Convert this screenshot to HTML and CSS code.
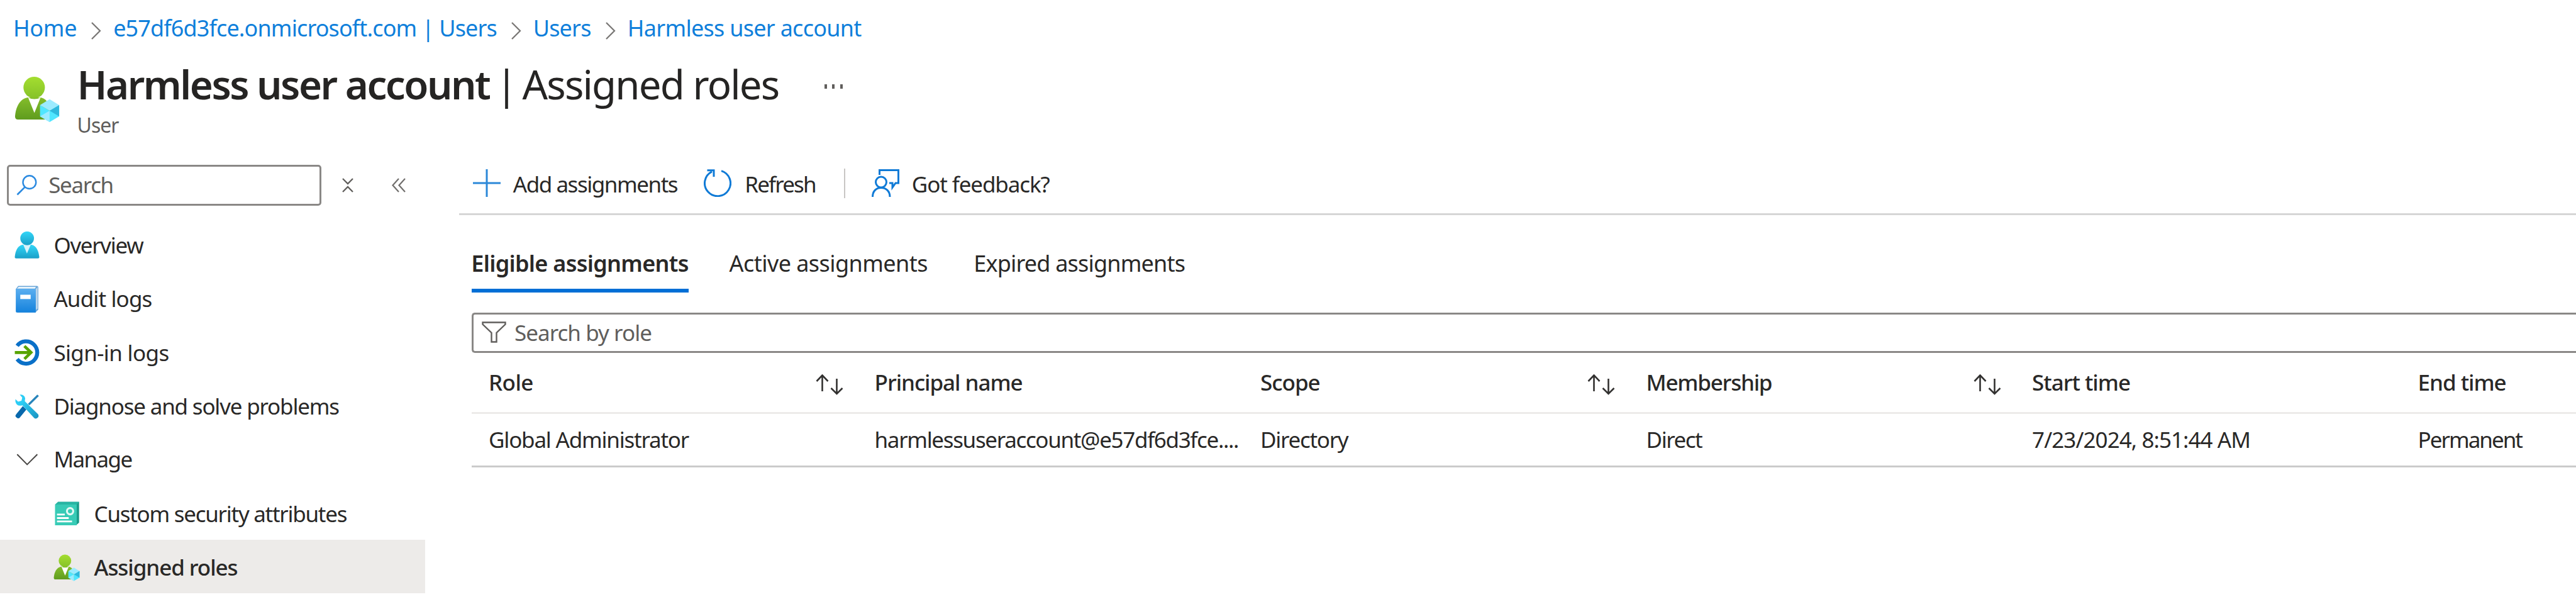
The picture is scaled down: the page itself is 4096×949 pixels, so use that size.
FILE: index.html
```html
<!DOCTYPE html>
<html lang="en">
<head>
<meta charset="utf-8">
<title>Harmless user account | Assigned roles</title>
<link rel="stylesheet" href="styles.css">
</head>
<body>
<svg class="defs" aria-hidden="true">
  <defs>
    <linearGradient id="green-head" x1="0" y1="0" x2="0" y2="1"><stop offset="0" stop-color="#a4de30"/><stop offset="1" stop-color="#86c229"/></linearGradient>
    <linearGradient id="green-body" x1="0" y1="0" x2="0" y2="1"><stop offset="0" stop-color="#84bd2b"/><stop offset="1" stop-color="#5f9c1e"/></linearGradient>
    <linearGradient id="cyan" x1="0" y1="0" x2="0" y2="1"><stop offset="0" stop-color="#33d6f8"/><stop offset="1" stop-color="#1aa0c8"/></linearGradient>
    <linearGradient id="book" x1="0" y1="0" x2="0" y2="1"><stop offset="0" stop-color="#5aaef0"/><stop offset="1" stop-color="#1482dc"/></linearGradient>
    <linearGradient id="wrench" x1="0" y1="0" x2="1" y2="1"><stop offset="0.3" stop-color="#2ccdf5"/><stop offset="1" stop-color="#1a93c0"/></linearGradient>
    <symbol id="user-role" viewBox="74 30 232 238">
      <path d="M92 252Q77 252 77 236C80 190 100 146 142 139H208C238 145 260 170 262 252Z" fill="url(#green-body)"/>
      <path d="M144 139L176 218L208 139Q176 156 144 139Z" fill="#fff"/>
      <circle cx="175" cy="88" r="55" fill="url(#green-head)"/>
      <path d="M205 178L254 207V265L205 236Z" fill="#50e6ff"/>
      <path d="M303 178L254 207V265L303 236Z" fill="#50e6ff"/>
      <path d="M205 178L254 148L303 178L254 207Z" fill="#9cebff"/>
      <path d="M303 178L254 207L303 236Z" fill="#2fb9dd"/>
      <path d="M205 236L254 207V265Z" fill="#9cebff"/>
    </symbol>
    <symbol id="sort" viewBox="0 0 44 33">
      <path d="M10.500 27V1.500M1.500 11L10.500 1.500L19.500 11M33.500 7V31M24.500 22L33.500 31L42.500 22" fill="none" stroke="#323130" stroke-width="2.600"/>
    </symbol>
    <symbol id="crumb-sep" viewBox="0 0 17 28">
      <path d="M2 1L15 14L2 27" fill="none" stroke="#7a7876" stroke-width="2.300"/>
    </symbol>
  </defs>
</svg>

<nav class="breadcrumb">
  <a class="crumb-home">Home</a>
  <svg class="sep"><use href="#crumb-sep"/></svg>
  <a class="crumb-tenant">e57df6d3fce.onmicrosoft.com | Users</a>
  <svg class="sep"><use href="#crumb-sep"/></svg>
  <a class="crumb-users">Users</a>
  <svg class="sep"><use href="#crumb-sep"/></svg>
  <a class="crumb-account">Harmless user account</a>
</nav>

<header class="header">
  <svg class="header-icon"><use href="#user-role"/></svg>
  <div>
    <div class="title">
      <h1 class="title-name">Harmless user account</h1>
      <span>|</span>
      <span class="title-page">Assigned roles</span>
      <svg class="dots" viewBox="0 0 29 7"><path d="M0 0h4v7h-4zM12 0h4v7h-4zM25 0h4v7h-4z" fill="#605e5c"/></svg>
    </div>
    <div class="subtitle">User</div>
  </div>
</header>

<div class="content">
  <aside class="sidebar">
    <div class="side-tools">
      <div class="side-search">
        <svg class="magnifier" viewBox="0 0 34 34"><circle cx="21.500" cy="12" r="10.700" fill="none" stroke="#2b8ae0" stroke-width="2.500"/><path d="M14 20L1.500 32.500" stroke="#2b8ae0" stroke-width="2.800"/></svg>
        <span class="search-label">Search</span>
      </div>
      <svg class="collapse" viewBox="0 0 18 23"><path d="M1 1L9 9L17 1M1 22L9 14L17 22" fill="none" stroke="#605e5c" stroke-width="2.300"/></svg>
      <svg class="chevrons" viewBox="0 0 22 23"><path d="M11 1L1.500 11.500L11 22M21 1L11.500 11.500L21 22" fill="none" stroke="#706e6c" stroke-width="2.200"/></svg>
    </div>
    <div class="nav">
      <div class="nav-item">
        <svg class="nav-icon" viewBox="40 48 135 137">
          <path d="M52 185Q44 185 45 177C48 145 60 119 85 115H130C154 119 167 145 170 177Q171 185 163 185Z" fill="url(#cyan)"/>
          <path d="M88 114L107 160L127 114Z" fill="#d9f3fb"/>
          <circle cx="108" cy="82" r="35" fill="url(#cyan)"/>
        </svg>
        <span class="t-overview">Overview</span>
      </div>
      <div class="nav-item">
        <svg class="nav-icon" viewBox="40 323 135 137">
          <path d="M50 340L62 324H158Q165 324 165 332V445L150 460H58Z" fill="#6aa6d8"/>
          <path d="M56 338L65 329H153L148 338Z" fill="#eaf5fd"/>
          <path d="M152 340L162 330V440L152 447Z" fill="#bcd5ea"/>
          <path d="M50 339H152V460H57Q50 460 50 453Z" fill="url(#book)"/>
          <path d="M73 369H126V391H73Z" fill="#fff"/>
        </svg>
        <span class="t-audit">Audit logs</span>
      </div>
      <div class="nav-item">
        <svg class="nav-icon" viewBox="40 600 135 137">
          <path d="M57 634A57 57 0 1 1 57 702" fill="none" stroke="#0a70c8" stroke-width="20"/>
          <path d="M45 668H126M94 635L128 668L94 701" fill="none" stroke="#57a300" stroke-width="15"/>
        </svg>
        <span class="t-signin">Sign-in logs</span>
      </div>
      <div class="nav-item">
        <svg class="nav-icon" viewBox="40 36 135 137">
          <path d="M160 43L168 50L120 97L112 90Z" fill="#2784ba"/>
          <path d="M86 101L104 119L70 161Q63 168 54 160L50 156Q46 150 52 143Z" fill="#0868ac"/>
          <path d="M70 43Q94 42 98 62L96 76L164 143Q170 153 162 161Q153 169 144 162L84 97Q54 106 48 78V66L62 79L79 74L83 58Z" fill="url(#wrench)"/>
        </svg>
        <span class="t-diagnose">Diagnose and solve problems</span>
      </div>
      <div class="nav-item manage">
        <svg class="nav-icon" viewBox="40 305 135 137"><path d="M57 347L108 399L160 347" fill="none" stroke="#484644" stroke-width="6.500"/></svg>
        <span class="t-manage">Manage</span>
      </div>
      <div class="nav-item sub">
        <svg class="nav-icon" viewBox="245 586 135 137">
          <path d="M268 594H376V700L360 714H268Z" fill="#1c9c8a"/>
          <path d="M253 608L268 594H376L364 608Z" fill="#28b5a3"/>
          <path d="M253 608H364V714H253Z" fill="#38cbb6"/>
          <circle cx="330" cy="642" r="16" fill="none" stroke="#e6faf6" stroke-width="10"/>
          <path d="M263 659H303M263 677H323M263 694H340" stroke="#fff" stroke-width="9"/>
        </svg>
        <span class="t-custom">Custom security attributes</span>
      </div>
      <div class="nav-item sub selected">
        <svg class="nav-icon"><use href="#user-role"/></svg>
        <span class="t-assigned">Assigned roles</span>
      </div>
    </div>
  </aside>

  <main class="main">
    <div class="toolbar">
      <svg class="tool-icon" viewBox="0 0 44 44"><path d="M22 0V44M0 22H44" stroke="#2b88d8" stroke-width="3"/></svg>
      <span class="t-add">Add assignments</span>
      <svg class="tool-icon" viewBox="0 0 44 44"><path d="M28 2.600A20.500 20.500 0 1 1 13 3.800M5.500 1.800H16V12" fill="none" stroke="#0f7ad6" stroke-width="3"/></svg>
      <span class="t-refresh">Refresh</span>
      <span class="divider"></span>
      <svg class="tool-icon" viewBox="0 0 44 44"><path d="M12.500 9V1.500H42.500V22H38L33 29V22H28M1.500 44C1.500 35 7 29.500 15 29.500S29 35 29 44" fill="none" stroke="#0f7ad6" stroke-width="3"/><circle cx="15" cy="20.500" r="8.500" fill="none" stroke="#0f7ad6" stroke-width="3"/></svg>
      <span class="t-feedback">Got feedback?</span>
    </div>
    <div class="panel">
      <div class="tabs">
        <div class="tab active">Eligible assignments</div>
        <div class="tab t-active">Active assignments</div>
        <div class="tab t-expired">Expired assignments</div>
      </div>
      <div class="role-search">
        <svg class="funnel" viewBox="0 0 39 34"><path d="M1.500 1.500H37.500V4.500L23.500 18V32.500H15.500V18L1.500 4.500Z" fill="none" stroke="#605e5c" stroke-width="2.400"/></svg>
        <span class="t-byrole">Search by role</span>
      </div>
      <div class="row head">
        <div class="cell"><span class="h-role">Role</span><svg class="sort"><use href="#sort"/></svg></div>
        <div class="cell"><span class="h-principal">Principal name</span></div>
        <div class="cell"><span class="h-scope">Scope</span><svg class="sort"><use href="#sort"/></svg></div>
        <div class="cell"><span class="h-member">Membership</span><svg class="sort"><use href="#sort"/></svg></div>
        <div class="cell"><span class="h-start">Start time</span></div>
        <div class="cell"><span class="h-end">End time</span></div>
      </div>
      <div class="row">
        <div class="cell"><span class="d-role">Global Administrator</span></div>
        <div class="cell"><span class="d-principal">harmlessuseraccount@e57df6d3fce....</span></div>
        <div class="cell"><span class="d-scope">Directory</span></div>
        <div class="cell"><span class="d-member">Direct</span></div>
        <div class="cell"><span class="d-start">7/23/2024, 8:51:44 AM</span></div>
        <div class="cell"><span class="d-end">Permanent</span></div>
      </div>
    </div>
  </main>
</div>
</body>
</html>
```
FILE: styles.css
```css
* { box-sizing: border-box; }
body {
  margin: 0;
  width: 4096px;
  height: 949px;
  overflow: hidden;
  background: #fff;
  color: #292827;
  font: 35px/48px "Noto Sans", "Open Sans", sans-serif;
  white-space: nowrap;
}
svg { display: block; flex: none; }
.defs { position: absolute; width: 0; height: 0; }

/* Breadcrumb */
.breadcrumb {
  display: grid;
  grid-template-columns: 123.2px 36px 631.6px 35.9px 114.5px 35.7px auto;
  align-items: center;
  height: 90px;
  padding-left: 21px;
  color: #0f7fdb;
  font-size: 36px;
}
.sep { width: 17px; height: 28px; margin-top: 7px; }
.crumb-home { letter-spacing: -0.31px; }
.crumb-tenant { letter-spacing: -0.88px; }
.crumb-users { letter-spacing: -0.81px; }
.crumb-account { letter-spacing: -0.72px; }

/* Title */
.header { display: grid; grid-template-columns: 99.500px auto; height: 129px; padding-left: 23px; }
.header-icon { width: 72px; height: 74px; margin-top: 31px; }
.title {
  display: grid;
  grid-template-columns: 665.500px 42.600px 480.900px auto;
  align-items: center;
  height: 88px;
  font-size: 63.500px;
  line-height: 88px;
  color: #252423;
}
.title-name { margin: 0; font-size: inherit; font-weight: 600; letter-spacing: -2.48px; }
.title-page { letter-spacing: -1.83px; }
.dots { width: 29px; height: 7px; margin-top: 6px; }
.subtitle { font-size: 32px; line-height: 42px; letter-spacing: -1px; color: #605e5c; }

.content { display: grid; grid-template-columns: 676px 1fr; column-gap: 53.600px; }

/* Sidebar */
.side-tools { display: flex; align-items: center; margin-top: 42.500px; height: 65px; padding-left: 11px; }
.side-search {
  display: flex;
  align-items: center;
  width: 499.500px;
  height: 65px;
  padding-left: 12.400px;
  border: 3px solid #8a8886;
  border-radius: 5px;
}
.magnifier { width: 33px; height: 33px; }
.search-label { margin-left: 17.800px; letter-spacing: -1.35px; color: #605e5c; }
.collapse { width: 18px; height: 23px; margin-left: 33.500px; }
.chevrons { width: 22px; height: 23px; margin-left: 60.500px; }
.nav { margin-top: 18.800px; }
.nav-item { display: flex; align-items: center; gap: 21.700px; height: 85.400px; padding: 4px 0 0 21.700px; }
.nav-item.manage { padding-top: 1px; }
.nav-item.sub { padding-left: 85.300px; gap: 22.300px; }
.selected { background: #edebe9; font-weight: 500; }
.nav-icon { width: 42px; height: 43px; }
.t-overview { letter-spacing: -1.33px; }
.t-audit { letter-spacing: -0.87px; }
.t-signin { letter-spacing: -0.65px; }
.t-diagnose { letter-spacing: -1.2px; }
.t-manage { letter-spacing: -1.6px; }
.t-custom { letter-spacing: -1.28px; }
.t-assigned { letter-spacing: -1.08px; }

/* Command bar */
.toolbar {
  display: grid;
  grid-template-columns: 64.200px 302.900px 65.600px 157.700px 44.400px 63.500px auto;
  align-items: center;
  margin-top: 24px;
  height: 99.400px;
  padding: 4px 0 0 22px;
  border-bottom: 3px solid #d6d6d6;
}
.tool-icon { width: 44px; height: 44px; margin-top: -4px; }
.divider { width: 2.500px; height: 47px; margin-top: -4px; background: #c8c6c4; }
.t-add { letter-spacing: -1.47px; }
.t-refresh { letter-spacing: -1.85px; }
.t-feedback { letter-spacing: -1.12px; }

/* Tabs */
.panel { padding-left: 20.700px; }
.tabs { display: grid; grid-template-columns: 345px 388.700px auto; padding-top: 46px; font-size: 36px; }
.tab { height: 77px; line-height: 61px; }
.tab.active { border-bottom: 6px solid #006fd6; font-weight: 600; letter-spacing: -0.7px; text-indent: -1px; }
.tab.t-active { margin-left: 64.300px; letter-spacing: -0.56px; }
.tab.t-expired { margin-left: 64.300px; letter-spacing: -0.81px; }

/* Role filter */
.role-search {
  display: flex;
  align-items: center;
  height: 64.200px;
  margin-top: 31.600px;
  padding-left: 12.800px;
  border: 3px solid #8a8886;
  border-right: 0;
  border-radius: 5px 0 0 5px;
}
.funnel { width: 39px; height: 34px; margin-bottom: 3px; }
.t-byrole { margin-left: 12.900px; color: #605e5c; letter-spacing: -0.95px; }

/* Assignments table */
.row {
  display: grid;
  grid-template-columns: repeat(5, 613.500px) 1fr;
  align-items: center;
  height: 85.400px;
  padding-left: 26.800px;
  border-bottom: 3px solid #cbcbcb;
}
.row.head { height: 96.800px; border-color: #edebe9; font-weight: 500; }
.cell { display: flex; align-items: center; justify-content: space-between; min-width: 0; }
.sort { width: 44px; height: 33px; margin: 6px 49.500px 0 0; }
.h-role { letter-spacing: -0.6px; }
.h-principal { letter-spacing: -1.05px; }
.h-scope { letter-spacing: -1px; }
.h-member { letter-spacing: -1.23px; }
.h-start { letter-spacing: -1.02px; }
.h-end { letter-spacing: -1.03px; }
.d-role { letter-spacing: -1.22px; }
.d-principal { letter-spacing: -1.34px; }
.d-scope { letter-spacing: -1.3px; }
.d-member { letter-spacing: -1.5px; }
.d-start { letter-spacing: -0.94px; }
.d-end { letter-spacing: -2px; }
```
